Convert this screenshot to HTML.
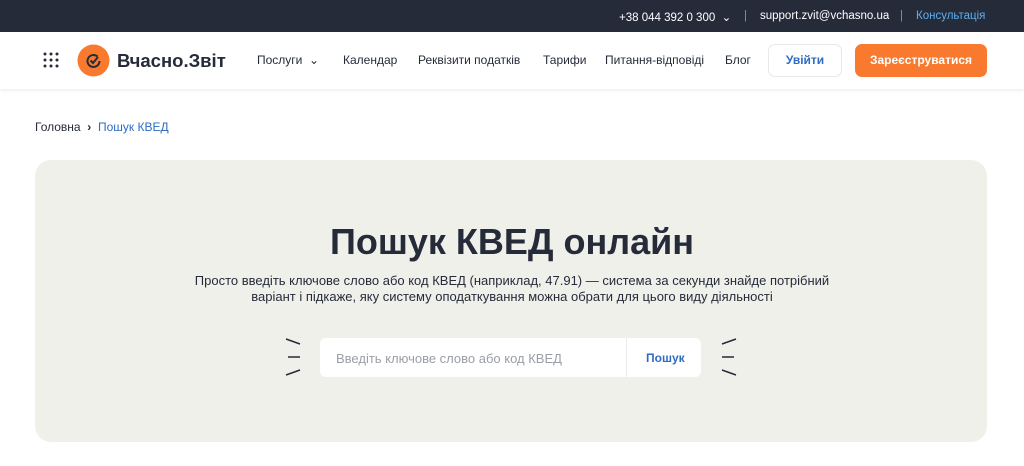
<!DOCTYPE html>
<html><head><meta charset="utf-8"><style>
*{margin:0;padding:0;box-sizing:border-box}
body{width:1024px;height:466px;background:#fff;font-family:"Liberation Sans",sans-serif;position:relative;overflow:hidden;color:#262b3a}
.top{position:absolute;left:0;top:0;width:1024px;height:32px;background:#262b3a;color:#fff;font-size:11.5px}
.top span{position:absolute;top:10px}
.nav{position:absolute;top:32px;left:0;width:1024px;height:57px;background:#fff;box-shadow:0 2px 3px rgba(0,0,0,.06)}
.nav a{position:absolute;top:21px;font-size:12px;color:#262b3a}
.btn{position:absolute;top:12px;height:33px;border-radius:7px;font-size:12px;font-weight:bold;text-align:center;line-height:33px}
.panel{position:absolute;left:35px;top:160px;width:952px;height:282px;background:#f0f0eb;border-radius:16px}
h1{position:absolute;top:221px;left:0;width:1024px;text-align:center;font-size:36px;font-weight:bold;color:#262b3a}
.sub{position:absolute;top:273px;left:0;width:1024px;text-align:center;font-size:13px;line-height:16px;color:#262b3a}
.search{position:absolute;left:320px;top:338px;width:381px;height:39px;background:#fff;border-radius:6px}
</style></head><body>
<div class="top">
<span style="left:619px">+38 044 392 0 300 &nbsp;⌄</span>
<span style="left:744px;color:#8a8f99">|</span>
<span style="left:760px">support.zvit@vchasno.ua</span>
<span style="left:900px;color:#8a8f99">|</span>
<span style="left:916px;color:#5aaef0">Консультація</span>
</div>
<div class="nav">
<svg style="position:absolute;left:43px;top:20px" width="16" height="16"><g fill="#262b3a"><circle cx="2" cy="2" r="1.5"/><circle cx="8" cy="2" r="1.5"/><circle cx="14" cy="2" r="1.5"/><circle cx="2" cy="8" r="1.5"/><circle cx="8" cy="8" r="1.5"/><circle cx="14" cy="8" r="1.5"/><circle cx="2" cy="14" r="1.5"/><circle cx="8" cy="14" r="1.5"/><circle cx="14" cy="14" r="1.5"/></g></svg>
<svg style="position:absolute;left:77px;top:12px" width="33" height="33"><circle cx="16.5" cy="16.5" r="16" fill="#f97a2e"/><path d="M20.5 12.5A6 6 0 1 0 22.5 17" fill="none" stroke="#262b3a" stroke-width="2"/><path d="M13.5 16.5l2.5 2.5 5-6" fill="none" stroke="#262b3a" stroke-width="2"/></svg>
<div style="position:absolute;left:117px;top:18px;font-size:18.5px;font-weight:bold;color:#262b3a">Вчасно.Звіт</div>
<a style="left:257px">Послуги &nbsp;⌄</a>
<a style="left:343px">Календар</a>
<a style="left:418px">Реквізити податків</a>
<a style="left:543px">Тарифи</a>
<a style="left:605px">Питання-відповіді</a>
<a style="left:725px">Блог</a>
<div class="btn" style="left:768px;width:74px;border:1px solid #e6e8ec;color:#2e6cc4;line-height:31px">Увійти</div>
<div class="btn" style="left:855px;width:132px;background:#f97a2e;color:#fff">Зареєструватися</div>
</div>
<div style="position:absolute;left:35px;top:120px;font-size:12px">Головна &nbsp;<b>›</b>&nbsp; <span style="color:#2e6cc4">Пошук КВЕД</span></div>
<div class="panel"></div>
<h1>Пошук КВЕД онлайн</h1>
<div class="sub">Просто введіть ключове слово або код КВЕД (наприклад, 47.91) — система за секунди знайде потрібний<br>варіант і підкаже, яку систему оподаткування можна обрати для цього виду діяльності</div>
<svg style="position:absolute;left:283px;top:336px" width="20" height="42" stroke="#262b3a" stroke-width="1.5"><path d="M3 3l14 5M5 21h12M3 39l14-5"/></svg>
<svg style="position:absolute;left:719px;top:336px" width="20" height="42" stroke="#262b3a" stroke-width="1.5"><path d="M17 3L3 8M15 21H3M17 39L3 34"/></svg>
<div class="search">
<div style="position:absolute;left:16px;top:13px;font-size:13px;color:#9a9ea6">Введіть ключове слово або код КВЕД</div>
<div style="position:absolute;left:306px;top:0;width:1px;height:39px;background:#ececec"></div>
<div style="position:absolute;left:326px;top:13px;font-size:12px;font-weight:bold;color:#2e6cc4">Пошук</div>
</div>
</body></html>
